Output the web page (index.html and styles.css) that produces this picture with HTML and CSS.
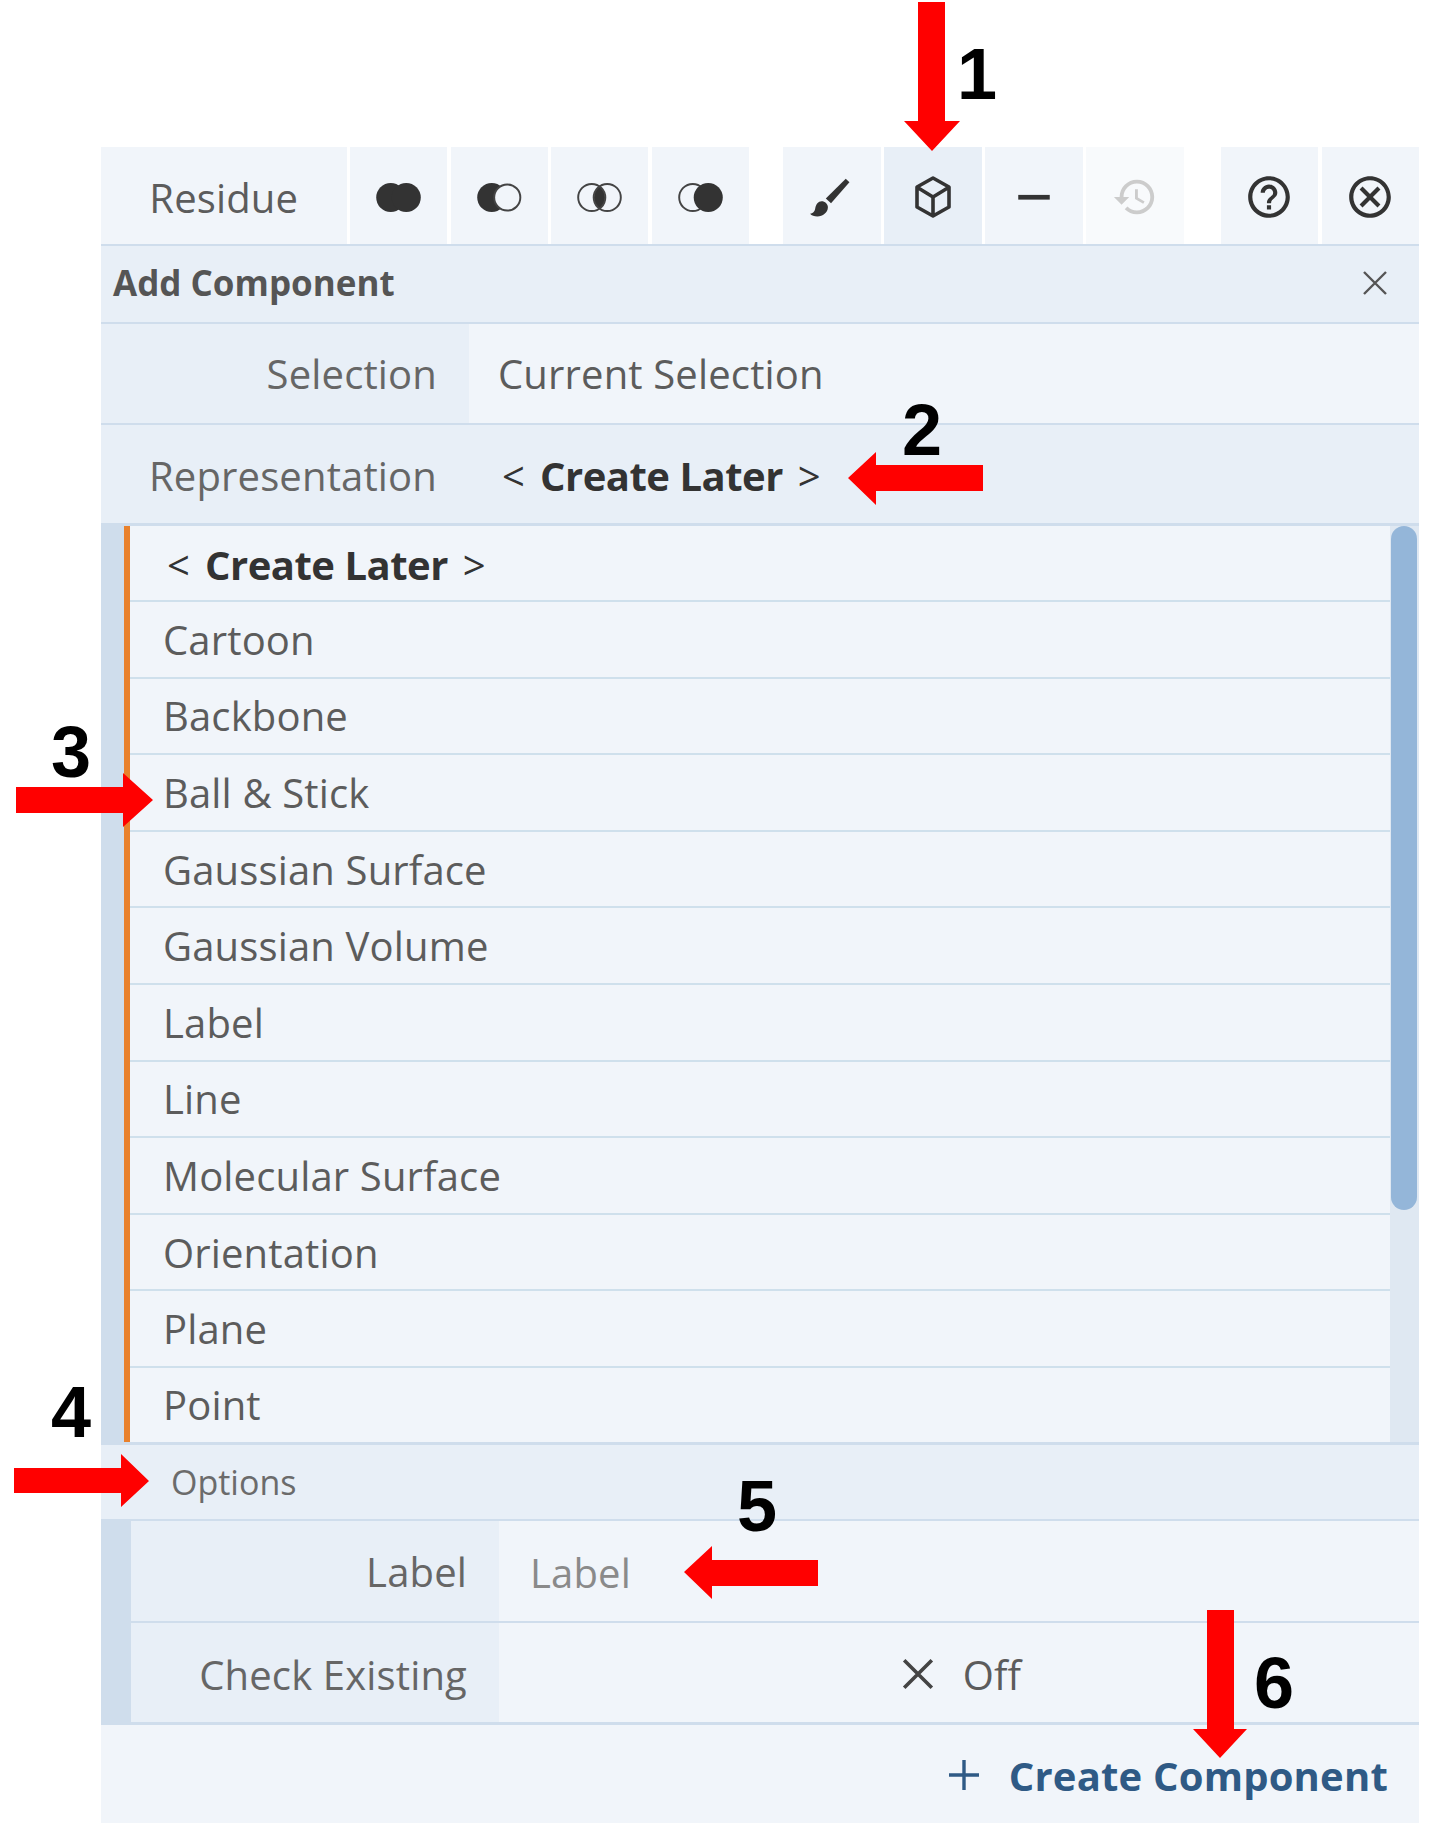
FILE: index.html
```html
<!DOCTYPE html>
<html lang="en">
<head>
<meta charset="UTF-8" />
<title>Add Component</title>
<link rel="stylesheet" href="styles.css">
</head>
<body>
  <div class="panel">
    <div class="toolbar">
      <div class="tool tool-name">Residue</div>
      <div class="tool tool-set">
        <svg viewBox="0 0 48 32" class="set-icon"><circle cx="16" cy="16" r="15" fill="#333"/><circle cx="32" cy="16" r="15" fill="#333"/></svg>
      </div>
      <div class="tool tool-set">
        <svg viewBox="0 0 48 32" class="set-icon"><circle cx="16" cy="16" r="15" fill="#333"/><circle cx="32" cy="16" r="13.5" fill="#f1f5fa" stroke="#444" stroke-width="2"/></svg>
      </div>
      <div class="tool tool-set">
        <svg viewBox="0 0 48 32" class="set-icon"><path d="M24 4.200a15 15 0 0 1 0 23.600a15 15 0 0 1 0-23.600z" fill="#333"/><circle cx="16" cy="16" r="14" fill="none" stroke="#444" stroke-width="2"/><circle cx="32" cy="16" r="14" fill="none" stroke="#444" stroke-width="2"/></svg>
      </div>
      <div class="tool tool-set tool-set-end">
        <svg viewBox="0 0 48 32" class="set-icon"><circle cx="16" cy="16" r="14" fill="none" stroke="#444" stroke-width="2"/><circle cx="32" cy="16" r="15" fill="#333"/></svg>
      </div>
      <div class="tool tool-act">
        <svg viewBox="0 0 40 40" class="brush-icon"><path d="M35 2.500l3.500 3.500L21 26l-5-4.500z" fill="#333"/><path d="M12 24c3.200 0 6 2.600 6 5.800C18 35 13 38.500 8 38.500c-3 0-5.500-.8-7-2.500 3.500-.5 4.500-2.500 5-5.500.6-3.500 2.800-6.500 6-6.500z" fill="#333"/></svg>
      </div>
      <div class="tool tool-act tool-on">
        <svg viewBox="0 0 40 44" class="cube-icon"><path d="M20 3l16 9v20l-16 9-16-9V12zM4.500 12.500L20 22l15.500-9.500M20 22v19" fill="none" stroke="#333" stroke-width="3.600" stroke-linejoin="round"/></svg>
      </div>
      <div class="tool tool-act">
        <svg viewBox="0 0 40 40" class="act-icon"><rect x="5" y="18" width="30" height="4.500" fill="#333"/></svg>
      </div>
      <div class="tool tool-act tool-off">
        <svg viewBox="0 0 24 24" class="history-icon"><path d="M13 3c-4.970 0-9 4.030-9 9H1l3.890 3.890.07.140L9 12H6c0-3.870 3.130-7 7-7s7 3.130 7 7-3.130 7-7 7c-1.930 0-3.680-.79-4.940-2.060l-1.420 1.420C8.270 19.990 10.510 21 13 21c4.970 0 9-4.030 9-9s-4.030-9-9-9zm-1 5v5l4.280 2.540.72-1.210-3.500-2.080V8H12z" fill="#ccc"/></svg>
      </div>
      <div class="tool tool-act">
        <svg viewBox="0 0 24 24" class="round-icon"><path d="M11 18h2v-2h-2v2zm1-16C6.480 2 2 6.480 2 12s4.480 10 10 10 10-4.480 10-10S17.520 2 12 2zm0 18c-4.410 0-8-3.590-8-8s3.590-8 8-8 8 3.590 8 8-3.590 8-8 8zm0-14c-2.210 0-4 1.790-4 4h2c0-1.100.9-2 2-2s2 .9 2 2c0 2-3 1.750-3 5h2c0-2.250 3-2.500 3-5 0-2.210-1.790-4-4-4z" fill="#333"/></svg>
      </div>
      <div class="tool tool-act tool-last">
        <svg viewBox="0 0 24 24" class="round-icon"><path d="M12 2C6.470 2 2 6.470 2 12s4.470 10 10 10 10-4.470 10-10S17.530 2 12 2zm0 18c-4.410 0-8-3.590-8-8s3.590-8 8-8 8 3.590 8 8-3.590 8-8 8zm3.590-13L12 10.590 8.410 7 7 8.410 10.590 12 7 15.590 8.410 17 12 13.410 15.590 17 17 15.590 13.410 12 17 8.410z" fill="#333"/></svg>
      </div>
    </div>

    <div class="head">
      <span class="head-title">Add Component</span>
      <svg viewBox="0 0 26 26" class="head-close"><path d="M2 2l22 22M24 2L2 24" stroke="#555" stroke-width="2.400"/></svg>
    </div>

    <div class="row">
      <div class="row-label">Selection</div>
      <div class="row-value">Current Selection</div>
    </div>
    <div class="row row-open">
      <div class="row-label">Representation</div>
      <div class="row-value"><span class="later later-head">&lt; <b>Create Later</b> &gt;</span></div>
    </div>

    <div class="list-wrap">
      <div class="list-gutter"></div>
      <ul class="list">
        <li class="list-first"><span class="later">&lt; <b>Create Later</b> &gt;</span></li>
        <li>Cartoon</li>
        <li>Backbone</li>
        <li>Ball &amp; Stick</li>
        <li>Gaussian Surface</li>
        <li>Gaussian Volume</li>
        <li>Label</li>
        <li>Line</li>
        <li>Molecular Surface</li>
        <li>Orientation</li>
        <li>Plane</li>
        <li class="list-last">Point</li>
      </ul>
      <div class="scroll-track"><div class="scroll-thumb"></div></div>
    </div>

    <div class="options-head">Options</div>
    <div class="options">
      <div class="row row-opt">
        <div class="row-label">Label</div>
        <div class="row-value row-placeholder">Label</div>
      </div>
      <div class="row row-opt row-check">
        <div class="row-label">Check Existing</div>
        <div class="row-value row-toggle">
          <svg viewBox="0 0 32 32" class="toggle-x"><path d="M3 3l26 26M29 3L3 29" stroke="#444" stroke-width="3.400"/></svg>
          <span>Off</span>
        </div>
      </div>
    </div>

    <div class="foot">
      <svg viewBox="0 0 30 30" class="foot-plus"><path d="M15 0v30M0 15h30" stroke="#2f5a85" stroke-width="3.400"/></svg>
      <span class="foot-text">Create Component</span>
    </div>
  </div>

  <!-- Annotations drawn over the screenshot -->
  <svg class="arrows" viewBox="0 0 1440 1841">
    <path d="M918 2h27v119h15l-28 30-28-30h14z"/>
    <path d="M848 478l28-26v13h107v26H876v14z"/>
    <path d="M153 800l-30-27v14H16v26h107v14z"/>
    <path d="M149 1481l-28-27v14H14v25h107v14z"/>
    <path d="M684 1572l28-26v14h106v26H712v13z"/>
    <path d="M1207 1610h27v119h13l-27 29-27-29h14z"/>
  </svg>
  <span class="num num-1">1</span>
  <span class="num num-2">2</span>
  <span class="num num-3">3</span>
  <span class="num num-4">4</span>
  <span class="num num-5">5</span>
  <span class="num num-6">6</span>
</body>
</html>
```

FILE: styles.css
```css
*, *:before, *:after {
  box-sizing: border-box;
}

body {
  margin: 0;
  min-height: 1841px;
  position: relative;
  background: #fff;
  font-family: 'Open Sans', 'Noto Sans', sans-serif;
  color: #5c5c5c;
}

.panel {
  position: absolute;
  left: 101px;
  top: 147px;
  width: 1318px;
  height: 1676px;
  display: flex;
  flex-direction: column;
  font-size: 40px;
  letter-spacing: 0.15px;
}

/* Toolbar */
.toolbar {
  display: flex;
  height: 97px;
  gap: 3.5px;
  flex: none;
}

.tool {
  background: #f1f5fa;
  display: flex;
  align-items: center;
  justify-content: center;
  padding-top: 3px;
}

.tool-name {
  width: 245.5px;
  color: #5c5c5c;
}

.tool-set {
  width: 97px;
}

.tool-set-end {
  margin-right: 31px;
}

.tool-act {
  width: 97.5px;
}

.tool-off {
  margin-right: 33.5px;
  background: #f8fafc;
}

.tool-last {
  flex: 1;
}

.tool-on {
  background: #e8eff7;
}

.set-icon {
  width: 47px;
  height: 31px;
}

.act-icon {
  width: 42px;
  height: 42px;
}

.brush-icon {
  width: 42px;
  height: 42px;
  margin-right: 4px;
}

.cube-icon {
  width: 40px;
  height: 44px;
}

.history-icon {
  width: 46px;
  height: 46px;
}

.round-icon {
  width: 50px;
  height: 50px;
}

/* Header */
.head {
  height: 80px;
  flex: none;
  background: #e8eff7;
  border-top: 2px solid #cfddec;
  border-bottom: 2px solid #cfddec;
  padding: 0 31px 3px 12px;
  display: flex;
  align-items: center;
  justify-content: space-between;
}

.head-title {
  font-weight: 700;
  font-size: 35px;
  letter-spacing: 0;
  color: #555;
}

.head-close {
  width: 26px;
  height: 26px;
}

/* Rows */
.row {
  display: flex;
  height: 101px;
  flex: none;
  border-bottom: 2px solid #cfddec;
}

.row-label {
  width: 368px;
  flex: none;
  background: #e8eff7;
  padding-right: 32px;
  display: flex;
  align-items: center;
  justify-content: flex-end;
  color: #666;
}

.row-value {
  flex: 1;
  background: #f1f5fa;
  padding-left: 29px;
  display: flex;
  align-items: center;
  color: #5c5c5c;
}

.row-open {
  background: #e8eff7;
  border-bottom: 3px solid #cfddec;
}

.row-open .row-label,
.row-open .row-value {
  background: #e8eff7;
  padding-top: 2px;
}

.later {
  color: #333;
  word-spacing: 4.5px;
}

.later b {
  font-weight: 700;
  letter-spacing: -0.5px;
  word-spacing: 0;
}

.later-head {
  margin-left: 4px;
}

/* Representation list */
.list-wrap {
  display: flex;
  height: 919px;
  flex: none;
  background: #cfddec;
  border-bottom: 3px solid #cfddec;
}

.list-gutter {
  width: 23px;
  flex: none;
  background: #cfddec;
}

.list {
  list-style: none;
  margin: 0;
  padding: 0;
  flex: 1;
  background: #f1f5fa;
  border-left: 6px solid #e9812c;
  display: flex;
  flex-direction: column;
}

.list li {
  height: 76.6px;
  flex: none;
  padding-left: 33px;
  display: flex;
  align-items: center;
  border-bottom: 2px solid #cfe0ec;
  color: #5c5c5c;
}

.list .list-first {
  height: 76px;
  padding-left: 37px;
  padding-top: 3px;
}

.list .list-last {
  border-bottom: none;
  flex: 1;
}

.scroll-track {
  width: 29px;
  flex: none;
  background: #dfe8f2;
  padding: 0 2px 0 1px;
}

.scroll-thumb {
  height: 684px;
  background: #94b6d9;
  border-radius: 13px;
}

/* Options */
.options-head {
  height: 76px;
  flex: none;
  background: #e8eff7;
  border-bottom: 2px solid #cfddec;
  padding-left: 70px;
  display: flex;
  align-items: center;
  font-size: 34px;
  letter-spacing: 0;
  color: #6b6b6b;
}

.options {
  flex: none;
  border-left: 30px solid #cfddec;
}

.options .row:last-child {
  border-bottom: 3px solid #cfddec;
}

.row-opt {
  height: 102px;
}

.row-placeholder {
  padding-left: 31px;
  padding-top: 3px;
  color: #8a8a8a;
}

.row-check .row-label {
  padding-top: 3px;
}

.row-toggle {
  padding: 3px 0 0 4px;
  justify-content: center;
  gap: 28px;
}

.toggle-x {
  width: 34px;
  height: 34px;
}

/* Footer */
.foot {
  flex: 1;
  background: #f1f5fa;
  padding: 2px 31px 0 0;
  display: flex;
  align-items: center;
  justify-content: flex-end;
  gap: 30px;
}

.foot-plus {
  width: 30px;
  height: 30px;
}

.foot-text {
  font-weight: 700;
  color: #2f5a85;
  letter-spacing: 0.2px;
}

/* Annotations */
.arrows {
  position: absolute;
  left: 0;
  top: 0;
  width: 1440px;
  height: 1841px;
  fill: #ff0000;
  pointer-events: none;
}

.num {
  position: absolute;
  font-family: 'Liberation Sans', Arial, sans-serif;
  font-weight: 700;
  font-size: 72px;
  line-height: 72px;
  color: #000;
}

.num-1 { left: 957px; top: 38px; }
.num-2 { left: 902px; top: 394px; }
.num-3 { left: 51px; top: 716px; }
.num-4 { left: 51px; top: 1376px; }
.num-5 { left: 737px; top: 1470px; }
.num-6 { left: 1254px; top: 1647px; }
```
